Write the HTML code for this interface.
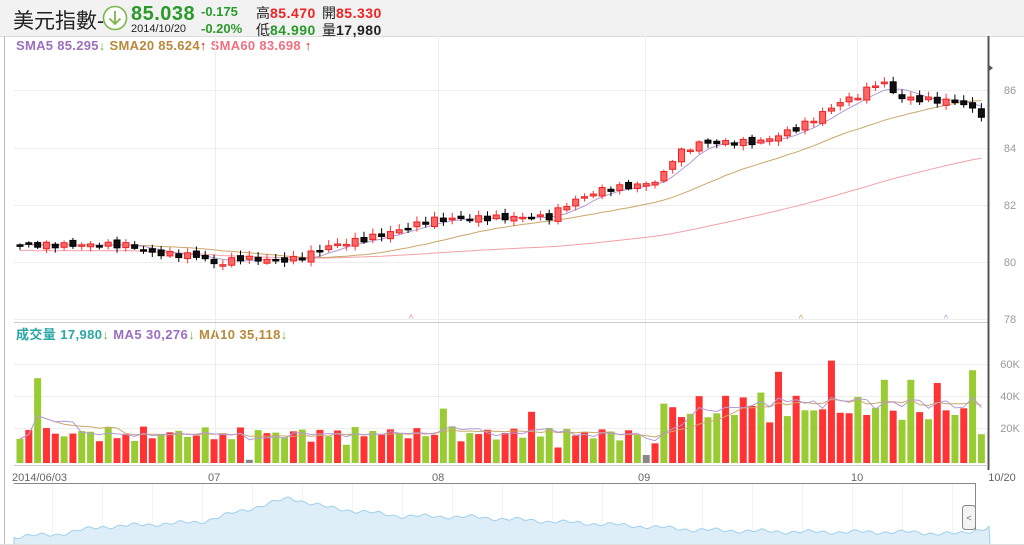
<!DOCTYPE html>
<html><head><meta charset="utf-8"><style>
body{margin:0;width:1024px;height:545px;overflow:hidden;background:#fff;font-family:"Liberation Sans","Noto Sans CJK TC",sans-serif;position:relative}
.t{position:absolute;white-space:nowrap}
</style></head><body>
<div style="position:absolute;left:0;top:0;width:1024px;height:36px;background:#f2f2f2;border-bottom:1px solid #ddd"></div>
<div class="t" style="left:13px;top:5px;font-size:21px;color:#222">美元指數-</div>
<svg class="t" style="left:102px;top:5px" width="26" height="26"><circle cx="13" cy="13" r="11.5" fill="#fff" stroke="#7ab648" stroke-width="1.6"/><path d="M13 6v13M7.5 13.5l5.5 5.5 5.5-5.5" fill="none" stroke="#7ab648" stroke-width="1.8"/></svg>
<div class="t" style="left:131px;top:3px;font-size:20px;color:#2a9a2a;font-weight:bold;letter-spacing:0.5px">85.038</div>
<div class="t" style="left:131px;top:23px;font-size:11px;color:#222">2014/10/20</div>
<div class="t" style="left:201px;top:4px;font-size:13px;color:#2a9a2a;font-weight:bold">-0.175</div>
<div class="t" style="left:201px;top:21px;font-size:13px;color:#2a9a2a;font-weight:bold">-0.20%</div>
<div class="t" style="left:256px;top:3px;font-size:14px;color:#222">高<span style="color:#e22;font-weight:bold;letter-spacing:0.5px">85.470</span></div>
<div class="t" style="left:256px;top:20px;font-size:14px;color:#222">低<span style="color:#2a9a2a;font-weight:bold;letter-spacing:0.5px">84.990</span></div>
<div class="t" style="left:322px;top:3px;font-size:14px;color:#222">開<span style="color:#e22;font-weight:bold;letter-spacing:0.5px">85.330</span></div>
<div class="t" style="left:322px;top:20px;font-size:14px;color:#222">量<span style="color:#222;font-weight:bold;letter-spacing:0.5px">17,980</span></div>
<div class="t" style="left:16px;top:38px;font-size:13px;font-weight:bold;letter-spacing:0.3px"><span style="color:#9b6fc0">SMA5 85.295</span><span style="color:#7ab648">↓</span> <span style="color:#b8893a">SMA20 85.624</span><span style="color:#c22">↑</span> <span style="color:#f07080">SMA60 83.698</span> <span style="color:#c22">↑</span></div>
<div class="t" style="left:16px;top:324px;font-size:13px;font-weight:bold;letter-spacing:0.4px"><span style="color:#2aa6a6">成交量 17,980</span><span style="color:#7ab648">↓</span> <span style="color:#9b6fc0">MA5 30,276</span><span style="color:#7ab648">↓</span> <span style="color:#b8893a">MA10 35,118</span><span style="color:#7ab648">↓</span></div>
<svg id="s" class="t" style="left:0;top:0" width="1024" height="545"></svg>
<script>
var s=document.getElementById('s'),h='';
function L(x1,y1,x2,y2,c,w){h+='<line x1="'+x1+'" y1="'+y1+'" x2="'+x2+'" y2="'+y2+'" stroke="'+c+'" stroke-width="'+(w||1)+'"/>';}
function R(x,y,w,hh,f,st){h+='<rect x="'+x+'" y="'+y+'" width="'+w+'" height="'+hh+'" fill="'+f+'"'+(st?' stroke="'+st+'"':'')+'/>';}
function T(x,y,t,c,sz,a){h+='<text x="'+x+'" y="'+y+'" fill="'+c+'" font-size="'+sz+'" text-anchor="'+(a||'start')+'" font-family="Liberation Sans,sans-serif">'+t+'</text>';}
L(4.5,36,4.5,545,'#bbb');
[90,148,205,262,319].forEach(function(y){L(14,y+.5,988,y+.5,'#eee')});
[364,396,428].forEach(function(y){L(14,y+.5,988,y+.5,'#eee')});
[215,438,645,857].forEach(function(x){L(x+.5,36,x+.5,465,'#eee')});
L(14,322.5,988,322.5,'#ccc');
function X(i){return 20+i*8.82}function Y(p){return 262-(p-80)*28.6}
function P(y){return 80+(262-y)/28.6}
// key points in pixel coords (x,y)
var KP=[[20,245],[130,245],[150,253],[200,256],[215,265],[240,258],[280,261],[300,258],[330,246],[360,240],[400,230],[430,220],[480,218],[550,217],[565,205],[600,190],[640,185],[660,180],[675,155],[700,143],[760,142],[800,127],[820,115],[840,102],[860,95],[880,80],[900,98],[930,100],[960,102],[985,117]];
var N=110,C=[];
for(var i=0;i<N;i++){var x=X(i);for(var k=0;k<KP.length-1;k++)if(x>=KP[k][0]&&x<=KP[k+1][0]){var t=(x-KP[k][0])/(KP[k+1][0]-KP[k][0]);C[i]=P(KP[k][1]+t*(KP[k+1][1]-KP[k][1]));break;}if(C[i]===undefined)C[i]=P(117);C[i]+=Math.sin(i*2.7)*0.1;}
function sma(a,n,off){var o=[];for(var i=0;i<a.length;i++){var st=Math.max(0,i-n+1),sm=0;for(var j=st;j<=i;j++)sm+=a[j];o.push(sm/(i-st+1)+(off||0));}return o}
function pl(a,c,f){var p='';a.forEach(function(v,i){p+=(i?'L':'M')+X(i).toFixed(1)+' '+f(v).toFixed(1)});h+='<path d="'+p+'" fill="none" stroke="'+c+'" stroke-width="1"/>';}
pl(sma(C,60,-0.2),'#f4a0a8',Y);pl(sma(C,20),'#c9a86a',Y);pl(sma(C,5),'#b49ad6',Y);
for(var i=0;i<N;i++){var o=(i?C[i-1]:80.6)+Math.sin(i*1.3)*0.08,c=C[i],up=c>=o,hi=Math.max(o,c)+0.05+Math.abs(Math.sin(i*3.1))*0.15,lo=Math.min(o,c)-0.05-Math.abs(Math.cos(i*2.3))*0.12;
var x=X(i);L(x,Y(hi),x,Y(lo),up?'#f33':'#000');var y1=Y(Math.max(o,c)),hh=Math.max(1.5,Math.abs(Y(o)-Y(c)));
R(x-3,y1,6,hh,up?'#f66':'#111',up?'#e22':'#000');}
L(988.5,36,988.5,470,'#555',2);
[[86,90],[84,148],[82,205],[80,262],[78,319]].forEach(function(a){T(1010,a[1]+4,a[0],'#999',11,'middle')});
h+='<path d="M993 68l-4 -3v6z" fill="#555"/>';
T(411,322,'^','#f88',10,'middle');T(801,322,'^','#c9a86a',10,'middle');T(946,322,'^','#b49ad6',10,'middle');
var V=[];for(var i=0;i<N;i++){var b=9+8*Math.abs(Math.sin(i*1.7))+6*Math.abs(Math.cos(i*0.9));if(i>72)b+=6+14*Math.abs(Math.sin(i*2.1));V[i]=b;}
V[2]=53;V[58]=32;V[48]=34;V[40]=20;V[80]=42;V[84]=44;V[86]=57;V[92]=64;V[98]=52;V[96]=30;V[101]=52;V[104]=50;V[106]=30;V[108]=58;V[109]=18;V[26]=2;V[71]=5;V[82]=41;V[88]=42;
var VC=[];for(var i=0;i<N;i++)VC[i]=(Math.sin(i*2.3)>0)?'#ff3333':'#99cc33';VC[2]='#99cc33';VC[26]='#888';VC[71]='#888';VC[92]='#ff3333';VC[108]='#99cc33';VC[109]='#99cc33';
function VY(v){return 463-v*1.6}
for(var i=0;i<N;i++){R(X(i)-3.5,VY(V[i]),7,V[i]*1.6,VC[i]);}
pl(sma(V,10),'#c9a86a',VY);pl(sma(V,5),'#b49ad6',VY);
[[60,364],[40,396],[20,428]].forEach(function(a){T(1010,a[1]+4,a[0]+'K','#999',11,'middle')});
L(14,465.5,988,465.5,'#ccc');
T(12,481,'2014/06/03','#666',11);T(208,481,'07','#666',11);T(432,481,'08','#666',11);T(638,481,'09','#666',11);T(851,481,'10','#666',11);T(1002,481,'10/20','#666',11,'middle');
L(14,483.5,975,483.5,'#888');L(975.5,483,975.5,545,'#888');
[52,102,152,202,252,302,352,402,452,502,552,602,652,702,752,802,852,902,952].forEach(function(x){L(x+.5,484,x+.5,545,'#eef4f8')});
var NK=[[14,537],[60,534],[100,527],[200,522],[290,498],[330,508],[400,516],[470,517],[560,522],[620,525],[700,530],[800,532],[900,532],[960,534],[985,528],[990,526]];
var p='M14 545';for(var x=14;x<=990;x+=3){var v;for(var k=0;k<NK.length-1;k++)if(x>=NK[k][0]&&x<=NK[k+1][0]){var t=(x-NK[k][0])/(NK[k+1][0]-NK[k][0]);v=NK[k][1]+t*(NK[k+1][1]-NK[k][1]);break;}v+=Math.sin(x*0.41)*1.3+Math.sin(x*0.13)*1.2;p+='L'+x+' '+v.toFixed(1);}p+='L990 545Z';
h+='<path d="'+p+'" fill="#ddeef8" stroke="#9fd0ee" stroke-width="1"/>';
h+='<rect x="962.5" y="505.5" width="13" height="24" rx="3" fill="#f4f4f4" stroke="#888"/>';T(969,521,'&lt;','#666',9,'middle');
L(0,544.5,1024,544.5,'#ddd');
s.innerHTML=h;
</script>
</body></html>
